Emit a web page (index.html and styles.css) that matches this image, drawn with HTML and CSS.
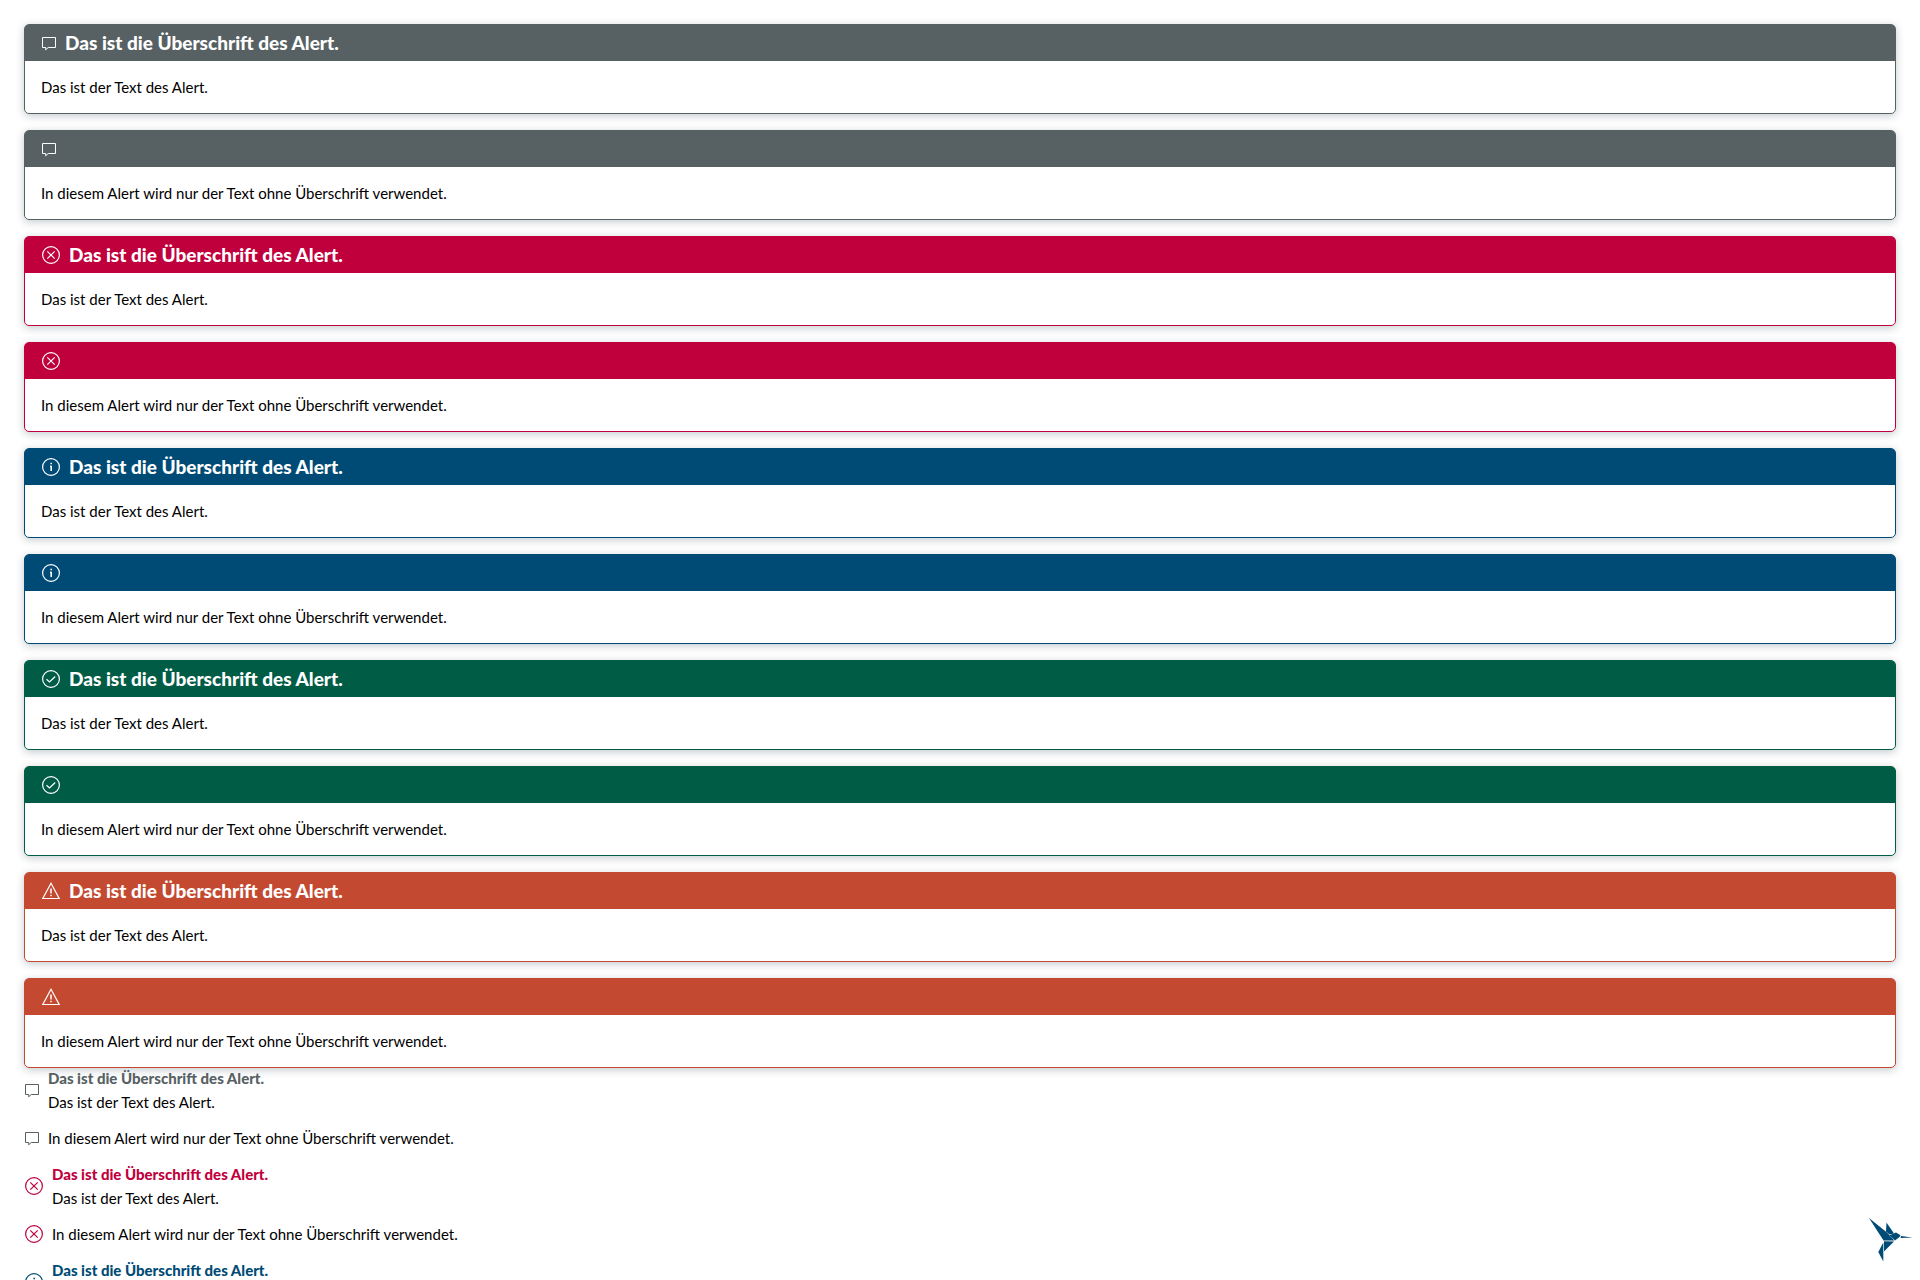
FILE: index.html
```html
<!DOCTYPE html>
<html lang="de">
<head>
<meta charset="utf-8">
<title>Alert</title>
<link rel="stylesheet" href="styles.css">
</head>
<body>
<svg class="sprite" aria-hidden="true">
  <symbol id="message" viewBox="0 0 16 20"><path d="M1.500 4.500h13v10H7.200L4.700 16.800V14.500H1.500z"/></symbol>
  <symbol id="error" viewBox="0 0 20 20"><circle cx="10" cy="10" r="8.400"/><path d="M6.300 6.300l7.400 7.400M13.700 6.300l-7.400 7.400"/></symbol>
  <symbol id="info" viewBox="0 0 20 20"><circle cx="10" cy="10" r="8.400"/><path stroke-width="1.600" d="M10.200 8.800V14M10.200 5.800v1.500"/><path d="M9 9.300h1"/></symbol>
  <symbol id="success" viewBox="0 0 20 20"><circle cx="10" cy="10" r="8.400"/><path d="M5.500 10.300l3 2.700 5.700-5.500"/></symbol>
  <symbol id="warning" viewBox="0 0 20 20"><path d="M10 2.300l8.200 15.200H1.800z"/><path stroke-width="1.500" d="M10 7.500v5M10 13.800v1.500"/></symbol>
</svg>
<main class="page">
  <section class="cards">
    <article class="card default"><header class="card-head"><svg class="icon narrow"><use href="#message"/></svg><h2 class="card-title">Das ist die Überschrift des Alert.</h2></header><p class="card-text">Das ist der Text des Alert.</p></article>
    <article class="card default"><header class="card-head"><svg class="icon narrow"><use href="#message"/></svg></header><p class="card-text">In diesem Alert wird nur der Text ohne Überschrift verwendet.</p></article>
    <article class="card error"><header class="card-head"><svg class="icon"><use href="#error"/></svg><h2 class="card-title">Das ist die Überschrift des Alert.</h2></header><p class="card-text">Das ist der Text des Alert.</p></article>
    <article class="card error"><header class="card-head"><svg class="icon"><use href="#error"/></svg></header><p class="card-text">In diesem Alert wird nur der Text ohne Überschrift verwendet.</p></article>
    <article class="card info"><header class="card-head"><svg class="icon"><use href="#info"/></svg><h2 class="card-title">Das ist die Überschrift des Alert.</h2></header><p class="card-text">Das ist der Text des Alert.</p></article>
    <article class="card info"><header class="card-head"><svg class="icon"><use href="#info"/></svg></header><p class="card-text">In diesem Alert wird nur der Text ohne Überschrift verwendet.</p></article>
    <article class="card success"><header class="card-head"><svg class="icon"><use href="#success"/></svg><h2 class="card-title">Das ist die Überschrift des Alert.</h2></header><p class="card-text">Das ist der Text des Alert.</p></article>
    <article class="card success"><header class="card-head"><svg class="icon"><use href="#success"/></svg></header><p class="card-text">In diesem Alert wird nur der Text ohne Überschrift verwendet.</p></article>
    <article class="card warning"><header class="card-head"><svg class="icon"><use href="#warning"/></svg><h2 class="card-title">Das ist die Überschrift des Alert.</h2></header><p class="card-text">Das ist der Text des Alert.</p></article>
    <article class="card warning"><header class="card-head"><svg class="icon"><use href="#warning"/></svg></header><p class="card-text">In diesem Alert wird nur der Text ohne Überschrift verwendet.</p></article>
  </section>
  <section class="messages">
    <article class="message default"><svg class="icon narrow"><use href="#message"/></svg><div class="message-body"><h2 class="message-title">Das ist die Überschrift des Alert.</h2><p class="message-text">Das ist der Text des Alert.</p></div></article>
    <article class="message default"><svg class="icon narrow"><use href="#message"/></svg><p class="message-text">In diesem Alert wird nur der Text ohne Überschrift verwendet.</p></article>
    <article class="message error"><svg class="icon"><use href="#error"/></svg><div class="message-body"><h2 class="message-title">Das ist die Überschrift des Alert.</h2><p class="message-text">Das ist der Text des Alert.</p></div></article>
    <article class="message error"><svg class="icon"><use href="#error"/></svg><p class="message-text">In diesem Alert wird nur der Text ohne Überschrift verwendet.</p></article>
    <article class="message info"><svg class="icon"><use href="#info"/></svg><div class="message-body"><h2 class="message-title">Das ist die Überschrift des Alert.</h2></div></article>
  </section>
</main>
<svg class="bird" viewBox="0 0 50 50" role="img" aria-label="Kolibri">
  <path d="M3 4L21 18.500 28.300 26.500H17.500z"/>
  <path d="M20.500 8.500L28 19.500 23.500 20.500 20 17.500z"/>
  <path d="M23.500 21.200L30 18.500 34.500 21.300 33.500 23 29 26.500z"/>
  <path d="M35 22L46.500 23.500 34.500 24z"/>
  <path d="M18 27.200L28 27.500 18 37.500z"/>
  <path d="M17.300 28.500V47.500L12.300 38z"/>
</svg>
</body>
</html>
```
FILE: styles.css
```css
* { box-sizing: border-box; }
body {
  margin: 0;
  height: 100vh;
  overflow: hidden;
  background: #fff;
  color: #000;
  font: 15px/24px Lato, "Open Sans", sans-serif;
}
h2, p { margin: 0; }
.sprite { display: none; }
.page { padding: 24px 24px 0; }
.cards { display: flex; flex-direction: column; gap: 16px; }
.default { --tone: #576164; }
.error { --tone: #c0003c; }
.info { --tone: #004b76; }
.success { --tone: #005c45; }
.warning { --tone: #c44931; }
.card {
  border: 1px solid var(--tone);
  border-radius: 5px;
  box-shadow: 0 2px 8px rgba(8, 35, 48, 0.24);
}
.card-head {
  display: flex;
  align-items: center;
  gap: 8px;
  height: 36px;
  padding: 0 16px;
  border-radius: 3px 3px 0 0;
  background: var(--tone);
  color: #fff;
}
.card-title { font-size: 19px; line-height: 24px; font-weight: 900; }
.card-text { padding: 14px 16px; }
.icon {
  flex: none;
  width: 20px;
  height: 20px;
  fill: none;
  stroke: currentColor;
  stroke-width: 1.2;
}
.narrow { width: 16px; stroke-width: 1; }
.messages {
  display: flex;
  flex-direction: column;
  gap: 12px;
  margin-top: -2px;
}
.message { display: flex; align-items: center; gap: 8px; }
.message:last-child { min-height: 48px; align-items: flex-start; }
.message:last-child .icon { align-self: center; }
.message .icon { color: var(--tone); }
.message-title { font-size: 15px; line-height: 24px; font-weight: 900; color: var(--tone); }
.bird {
  position: fixed;
  right: 4px;
  bottom: 16px;
  width: 50px;
  height: 50px;
  fill: #004b76;
}
```
